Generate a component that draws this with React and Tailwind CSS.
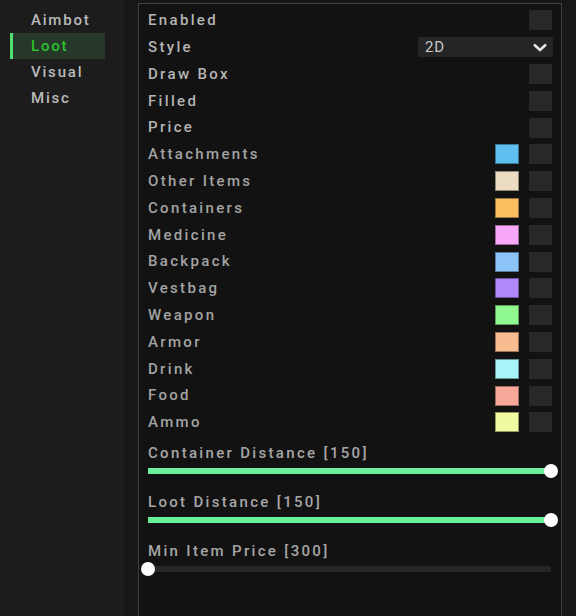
import React from "react";

const rows = [
  { label: "Enabled" },
  { label: "Style", select: true },
  { label: "Draw Box" },
  { label: "Filled" },
  { label: "Price" },
  { label: "Attachments", color: "#5fc0f0" },
  { label: "Other Items", color: "#ecdcc4" },
  { label: "Containers", color: "#fcc060" },
  { label: "Medicine", color: "#f8a8f8" },
  { label: "Backpack", color: "#8cc4f8" },
  { label: "Vestbag", color: "#b088f8" },
  { label: "Weapon", color: "#90f890" },
  { label: "Armor", color: "#f8bc90" },
  { label: "Drink", color: "#a8f4f8" },
  { label: "Food", color: "#f8a898" },
  { label: "Ammo", color: "#f0f8a0" },
];

const font = { fontFamily: "Roboto, 'Noto Sans', sans-serif" };

function Slider({ label, pct }) {
  return (
    <div className="flex flex-col">
      <div className="h-[22px] flex items-center text-[15px] font-medium tracking-[0.155em] text-[#a6a6a6]">{label}</div>
      <div className="relative h-[15px] flex items-center">
        <div className="h-[6px] w-full bg-[#262626] rounded-[1px] relative">
          <div className="absolute left-0 top-0 h-full bg-[#6af09a]" style={{ width: `${pct}%` }} />
        </div>
        <div
          className="absolute top-1/2 -translate-y-1/2 -translate-x-1/2 w-[14px] h-[14px] rounded-full bg-white"
          style={{ left: `${pct}%` }}
        />
      </div>
    </div>
  );
}

export default function App() {
  return (
    <div className="w-[576px] h-[616px] flex bg-[#171717] overflow-hidden" style={font}>
      <div className="w-[124px] bg-[#1c1c1c] pt-[7px] flex flex-col">
        <div className="h-[26px] pl-[31px] flex items-center text-[15px] font-medium tracking-[0.12em] text-[#bababa]">Aimbot</div>
        <div className="ml-[10px] w-[95px] h-[26px] flex items-center bg-[#27382b]">
          <div className="w-[3px] h-full bg-[#4fe070]" />
          <span className="pl-[18px] text-[15px] font-medium tracking-[0.12em] text-[#2cc02c]">Loot</span>
        </div>
        <div className="h-[26px] pl-[31px] flex items-center text-[15px] font-medium tracking-[0.12em] text-[#bababa]">Visual</div>
        <div className="h-[26px] pl-[31px] flex items-center text-[15px] font-medium tracking-[0.12em] text-[#bababa]">Misc</div>
      </div>
      <div className="w-[14px] bg-[#171717]" />
      <div className="w-[424px] mt-[3px] border-l border-r border-t border-[#404040] bg-[#121212] pt-[3px] px-[9px] flex flex-col">
        {rows.map((r, i) => (
          <div key={i} className="h-[26.8px] flex items-center">
            <span className={`flex-1 text-[15px] font-medium tracking-[0.155em] ${i < 5 ? "text-[#b4b4b4]" : "text-[#a3a3a3]"}`}>{r.label}</span>
            {r.select ? (
              <div className="w-[135px] h-[20px] bg-[#252525] flex items-center justify-between pl-[7px] pr-[5px] mr-[-1px]">
                <span className="text-[15px] text-[#c8c8c8] tracking-[0.06em]">2D</span>
                <svg width="16" height="11" viewBox="0 0 16 11">
                  <path d="M2 2.5 L8 8 L14 2.5" fill="none" stroke="#e4e4e4" strokeWidth="2.6" />
                </svg>
              </div>
            ) : (
              <>
                {r.color && (
                  <div className="w-[24px] h-[20px] mr-[10px] border border-[#00000060]" style={{ backgroundColor: r.color }} />
                )}
                <div className="w-[23px] h-[20px] bg-[#282828]" />
              </>
            )}
          </div>
        ))}
        <div className="mt-[6px] flex flex-col gap-[12px] pr-[1px]">
          <Slider label="Container Distance [150]" pct={100} />
          <Slider label="Loot Distance [150]" pct={100} />
          <Slider label="Min Item Price [300]" pct={0} />
        </div>
      </div>
    </div>
  );
}
